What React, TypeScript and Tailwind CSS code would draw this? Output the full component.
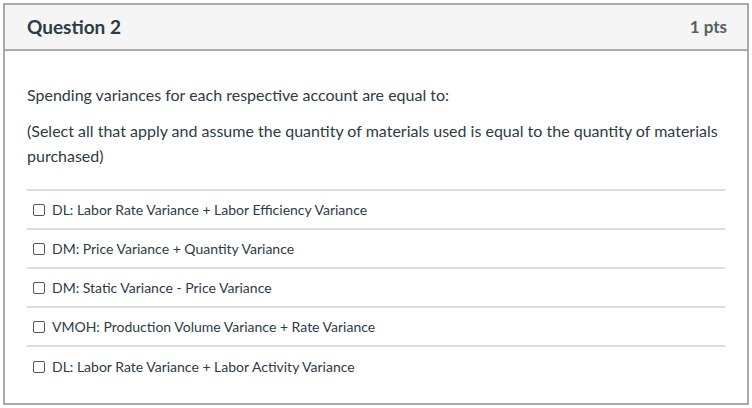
const options = [
  "DL: Labor Rate Variance + Labor Efficiency Variance",
  "DM: Price Variance + Quantity Variance",
  "DM: Static Variance - Price Variance",
  "VMOH: Production Volume Variance + Rate Variance",
  "DL: Labor Rate Variance + Labor Activity Variance",
];

export default function App() {
  return (
    <div className="h-[408px] w-[752px] bg-white p-[3px] font-['Lato','Liberation_Sans',sans-serif] text-[#2d3b45]">
      <div className="flex h-[402px] flex-col border-2 border-[#aaaaaa]">
        <div className="flex h-[46px] items-center justify-between border-b-2 border-[#aaaaaa] bg-[#f5f5f5] pl-[22px] pr-[20px]">
          <span className="text-[19px] font-bold">Question 2</span>
          <span className="text-[17px] font-bold text-[#555e66]">1 pts</span>
        </div>
        <div className="px-[22px] pt-[31px]">
          <p className="text-[16px] leading-[25px]">
            Spending variances for each respective account are equal to:
          </p>
          <p className="mt-[11px] text-[16px] leading-[25px]">
            (Select all that apply and assume the quantity of materials used is equal to the quantity of materials
            purchased)
          </p>
          <div className="mt-[21px] border-t-2 border-[#dddddd]">
            {options.map((o, i) => (
              <label
                key={o}
                className={`flex h-[39px] items-center gap-[7px] pl-[6px] text-[14px] ${
                  i < options.length - 1 ? "border-b-2 border-[#dddddd]" : ""
                }`}
              >
                <span className="inline-block h-[12px] w-[12px] rounded-[2px] border border-[#555]" />
                {o}
              </label>
            ))}
          </div>
        </div>
      </div>
    </div>
  );
}
